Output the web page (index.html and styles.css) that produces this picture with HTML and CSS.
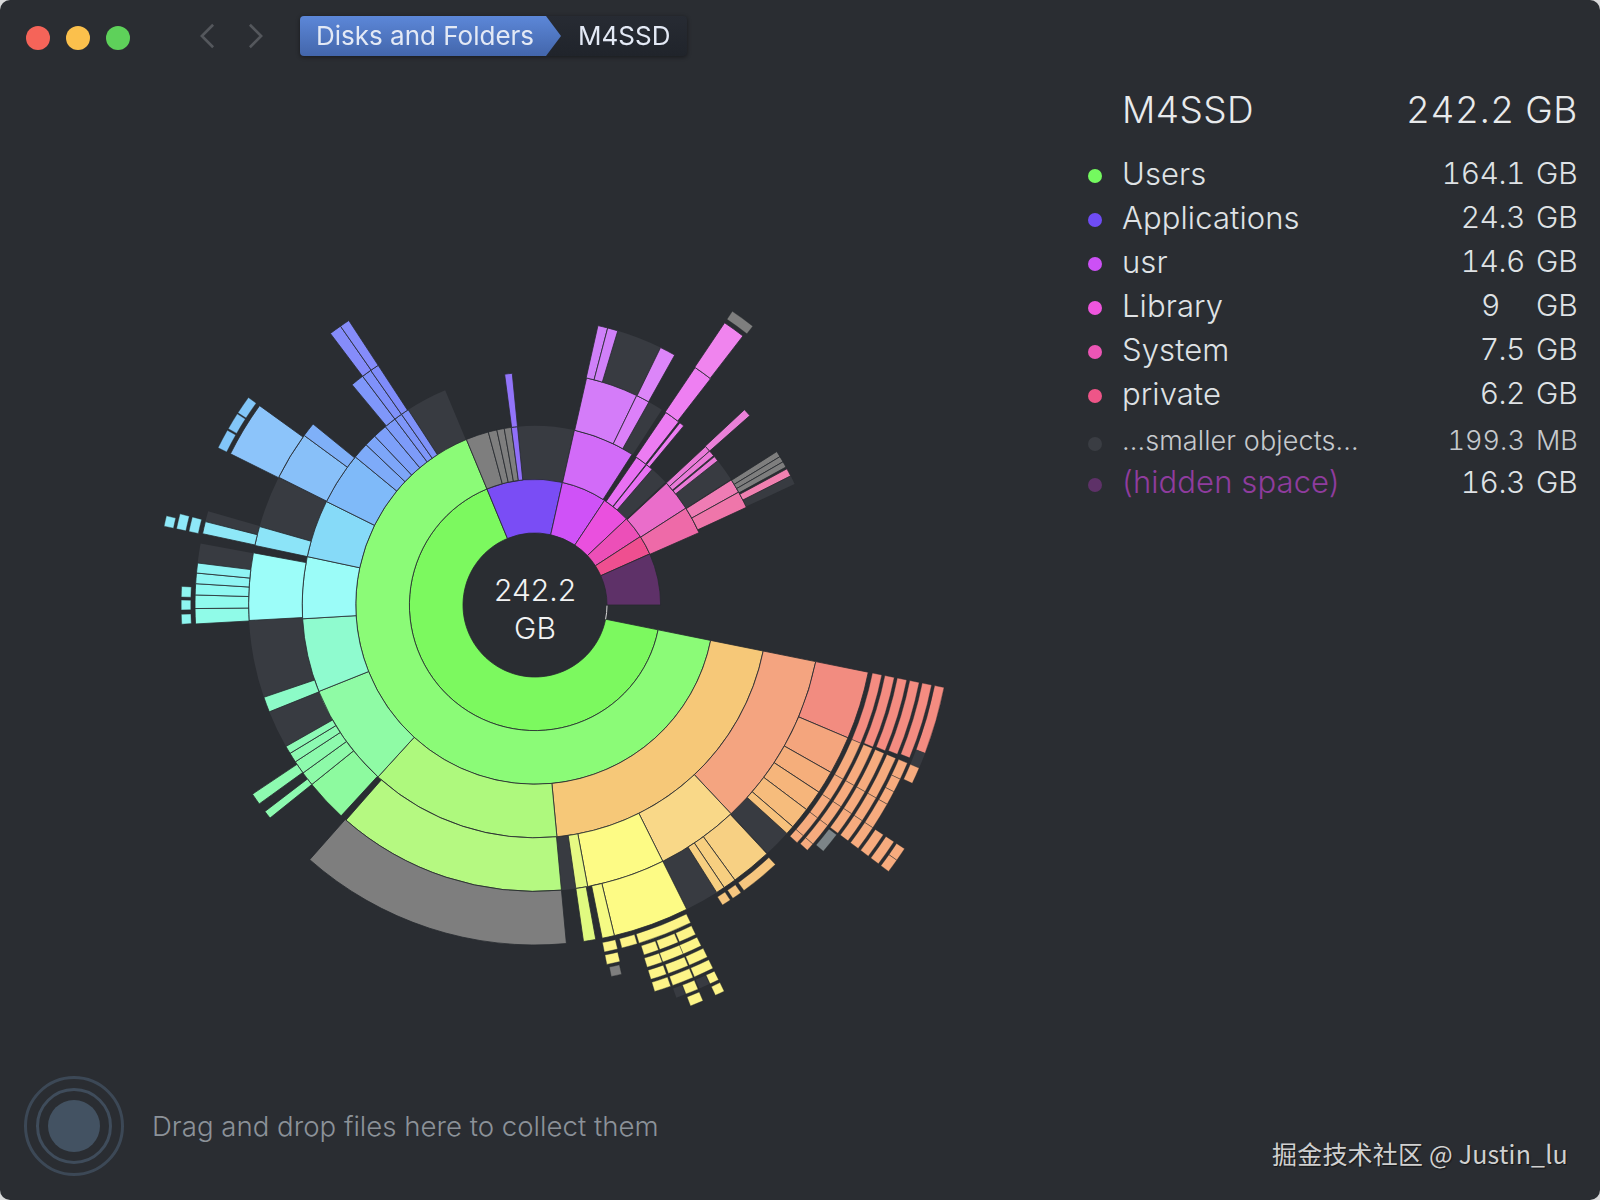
FILE: index.html
```html
<!DOCTYPE html>
<html lang="en">
<head>
<meta charset="utf-8">
<title>DaisyDisk</title>
<link rel="stylesheet" href="styles.css">
</head>
<body>
<div class="window">
  <header class="toolbar">
    <div class="lights">
      <span class="light red"></span>
      <span class="light yellow"></span>
      <span class="light green"></span>
    </div>
    <nav class="history">
      <svg class="chev" viewBox="0 0 16 26"><polyline points="14,1 2,13 14,25"/></svg>
      <svg class="chev" viewBox="0 0 16 26"><polyline points="2,1 14,13 2,25"/></svg>
    </nav>
    <div class="crumbs">
      <span class="crumb root">Disks and Folders</span>
      <span class="crumb leaf">M4SSD</span>
    </div>
  </header>

  <main class="content">
    <div class="chart-wrap">
      <svg id="sunburst" class="chart" viewBox="0 75 1088 1000">
        <g id="sectors"></g>
        <text class="center-num" x="535" y="601">242.2</text>
        <text class="center-num" x="535" y="639">GB</text>
      </svg>
    </div>
    <aside class="legend">
      <div class="legend-head"><span class="disk">M4SSD</span><span class="total">242.2 GB</span></div>
      <ul class="rows">
        <li class="row"><i class="dot c-users"></i><span class="name">Users</span><span class="num">164.1</span><span class="unit">GB</span></li>
        <li class="row"><i class="dot c-apps"></i><span class="name">Applications</span><span class="num">24.3</span><span class="unit">GB</span></li>
        <li class="row"><i class="dot c-usr"></i><span class="name">usr</span><span class="num">14.6</span><span class="unit">GB</span></li>
        <li class="row"><i class="dot c-lib"></i><span class="name">Library</span><span class="num whole">9</span><span class="unit">GB</span></li>
        <li class="row"><i class="dot c-sys"></i><span class="name">System</span><span class="num">7.5</span><span class="unit">GB</span></li>
        <li class="row"><i class="dot c-priv"></i><span class="name">private</span><span class="num">6.2</span><span class="unit">GB</span></li>
        <li class="row small"><i class="dot c-small"></i><span class="name">...smaller objects...</span><span class="num">199.3</span><span class="unit">MB</span></li>
        <li class="row hidden-space"><i class="dot c-hidden"></i><span class="name">(hidden space)</span><span class="num">16.3</span><span class="unit">GB</span></li>
      </ul>
    </aside>
  </main>

  <footer class="collector">
    <div class="target"><div class="target-mid"><div class="target-core"></div></div></div>
    <p class="hint">Drag and drop files here to collect them</p>
  </footer>

  <div class="watermark">掘金技术社区 @ Justin_lu</div>
</div>
<script src="chart.js"></script>
</body>
</html>
```
FILE: styles.css
```css
* { box-sizing: border-box; }
html, body { margin: 0; padding: 0; }
body {
  background: #d9dadb;
  font-family: "Inter", "Noto Sans", sans-serif;
  font-weight: 300;
  color: #e4e6e9;
}
.window {
  position: relative;
  width: 1600px;
  height: 1200px;
  background: #2a2d32;
  border-radius: 10px;
  overflow: hidden;
  display: flex;
  flex-direction: column;
}

/* toolbar */
.toolbar {
  height: 75px;
  flex: none;
  display: flex;
  align-items: center;
  padding-left: 26px;
}
.lights { display: flex; gap: 16px; }
.light { width: 24px; height: 24px; border-radius: 50%; }
.red { background: #f56459; }
.yellow { background: #fbc04c; }
.green { background: #5ed15a; }
.history {
  display: flex;
  gap: 33px;
  margin-left: 70px;
  margin-top: -3px;
}
.chev { width: 15px; height: 26px; }
.chev polyline { fill: none; stroke: #54575c; stroke-width: 2.8; }
.crumbs {
  display: flex;
  margin-left: 37px;
  height: 40px;
  margin-top: -3px;
  filter: drop-shadow(0 1px 2px rgba(0, 0, 0, .45));
}
.crumb {
  display: flex;
  align-items: center;
  padding-bottom: 2px;
  font-size: 26px;
  font-weight: 400;
  color: #e3e9f5;
}
.root {
  position: relative;
  z-index: 1;
  width: 261px;
  padding-left: 16px;
  border-radius: 4px 0 0 4px;
  background: linear-gradient(#5c87d8, #4366ab);
  clip-path: polygon(0 0, calc(100% - 15px) 0, 100% 50%, calc(100% - 15px) 100%, 0 100%);
}
.leaf {
  width: 141px;
  margin-left: -15px;
  padding-left: 32px;
  border-radius: 0 4px 4px 0;
  background: linear-gradient(#272b33, #20242b);
}

/* main */
.content {
  flex: 1;
  display: flex;
  min-height: 0;
}
.chart-wrap { width: 1088px; flex: none; }
.chart { display: block; width: 1088px; height: 1000px; overflow: visible; }
.center-num {
  font-family: "Inter", sans-serif;
  font-weight: 300;
  font-size: 30px;
  fill: #f2f3f4;
  text-anchor: middle;
}

/* legend */
.legend { flex: 1; padding: 12px 22px 0 0; }
.legend-head {
  display: flex;
  justify-content: space-between;
  padding-left: 34px;
  font-size: 37px;
  line-height: 46px;
  color: #e8eaec;
}
.disk { letter-spacing: .4px; }
.total { letter-spacing: .6px; font-variant-numeric: tabular-nums; }
.rows { list-style: none; margin: 18px 0 0; padding: 0; }
.row {
  display: grid;
  grid-template-columns: 34px 1fr auto 53px;
  align-items: center;
  height: 44px;
  font-size: 31px;
  letter-spacing: .1px;
  color: #dfe2e5;
}
.dot { width: 14px; height: 14px; border-radius: 50%; margin-top: 6px; margin-left: 0; }
.num {
  text-align: right;
  font-size: 30px;
  letter-spacing: -.5px;
  font-variant-numeric: tabular-nums;
}
.whole { padding-right: 25px; }
.unit { padding-left: 11px; font-size: 30px; letter-spacing: 0; }
.small { height: 45px; font-size: 27px; color: #c6c9cd; margin-top: 3px; }
.small .num { font-size: 27px; letter-spacing: .1px; }
.small .unit { font-size: 27px; padding-left: 11px; }
.hidden-space { height: 36px; }
.hidden-space .name { color: #8f3c9e; }
.c-users { background: #74f95f; }
.c-apps { background: #6f4cf5; }
.c-usr { background: #cc50f5; }
.c-lib { background: #ee55dd; }
.c-sys { background: #ec55b5; }
.c-priv { background: #ee5588; }
.c-small { background: #3a3d43; }
.c-hidden { background: #5e3168; }

/* footer */
.collector {
  flex: none;
  height: 125px;
  display: flex;
  align-items: flex-start;
  padding-left: 24px;
}
.target {
  width: 100px;
  height: 100px;
  margin-top: 1px;
  border: 3px solid #3c4856;
  border-radius: 50%;
  display: flex;
  align-items: center;
  justify-content: center;
}
.target-mid {
  width: 76px;
  height: 76px;
  border: 3px solid #3f4c5b;
  border-radius: 50%;
  display: flex;
  align-items: center;
  justify-content: center;
}
.target-core {
  width: 52px;
  height: 52px;
  border-radius: 50%;
  background: #435262;
}
.hint {
  margin: 33px 0 0 28px;
  font-size: 27.6px;
  line-height: 36px;
  color: #8c9299;
}
.watermark {
  position: absolute;
  left: 1272px;
  top: 1135px;
  font-family: "Noto Sans CJK SC", "Noto Sans", sans-serif;
  font-size: 25px;
  font-weight: 400;
  line-height: 36px;
  letter-spacing: .2px;
  color: #d0d0d0;
  text-shadow: 1px 1px 1px rgba(0, 0, 0, .5);
  white-space: nowrap;
}
```
FILE: chart.js
```js
(function () {
  var CX = 535, CY = 605;
  var RINGS = [72, 125.6, 179.2, 232.8, 286.4, 340];
  var DARK = '#383b41', GRAY = '#7e7e7e';

  function bandR(k) { return [344.2 + 12.7 * k, 353.8 + 12.7 * k]; }

  /* [ring, startDeg, endDeg, colour] – degrees clockwise from north */
  var segs = [
    /* ring 0 */
    [0, 101.4, 337.5, '#7cf95f'], [0, 337.5, 372.6, '#7a4df5'], [0, 12.6, 33.6, '#cf52f7'],
    [0, 33.6, 46.7, '#ea50de'], [0, 46.7, 57, '#ec4fb8'], [0, 57, 66, '#ef4f90'], [0, 66, 90, '#5e3168'],
    /* ring 1 */
    [1, 101.4, 337.5, '#8bfb77'],
    [1, 354.3, 372.6, DARK],
    [1, 337.5, 344.9, GRAY], [1, 344.9, 347.7, GRAY], [1, 347.7, 350.1, GRAY], [1, 350.1, 352.4, GRAY],
    [1, 352.4, 354.4, '#906ff9'],
    [1, 12.7, 32.8, '#d26bf8'],
    [1, 34.5, 38.3, '#e870f3'], [1, 38.5, 40.8, '#e870f3'], [1, 40.8, 46.7, DARK],
    [1, 47.2, 57.3, '#ea6dca'], [1, 57.3, 66.2, '#ee6aa8'],
    /* ring 2 */
    [2, 101.4, 174.6, '#f6c878'], [2, 174.6, 222.4, '#aef97d'], [2, 222.4, 248.2, '#8ffba5'],
    [2, 248.2, 266.6, '#8ffbcf'], [2, 266.6, 282, '#9bfcf8'], [2, 282, 296.4, '#86daf8'],
    [2, 296.4, 309.5, '#7fbaf9'],
    [2, 309.5, 313.5, '#7eabf9'], [2, 313.5, 316.5, '#7da6f9'], [2, 316.5, 320, '#7da0f9'],
    [2, 320, 323, '#7d9bf9'], [2, 323, 325, '#7e96f9'], [2, 325, 327, '#7e91f9'],
    [2, 327, 337.3, DARK],
    [2, 352.5, 354.4, '#9274fa'],
    [2, 12.8, 25.9, '#d47cf9'], [2, 25.9, 29.3, '#dc80f9'], [2, 29.3, 33, DARK],
    [2, 34.2, 38.1, '#ec7cf2'], [2, 38.5, 39.7, '#ec7cf2'],
    [2, 47.1, 48.6, '#e97ad8'], [2, 48.6, 50.1, '#e97ad8'], [2, 50.4, 51.7, '#e97ad8'], [2, 51.7, 57.3, DARK],
    [2, 57.5, 61, '#ef7cb4'], [2, 61, 65.2, '#ef76aa'],
    /* ring 3 */
    [3, 101.4, 136.8, '#f4a480'], [3, 136.8, 153.5, '#f9d888'], [3, 153.5, 169.4, '#fdfb85'],
    [3, 169.4, 171.8, '#e6f983'], [3, 171.8, 174.7, DARK], [3, 174.7, 221.3, '#b5f981'],
    [3, 222.6, 231.2, '#8dfa9f'], [3, 231.2, 234.1, '#8dfaa8'], [3, 234.1, 236.8, '#8dfaad'],
    [3, 236.8, 238.8, '#8dfab2'], [3, 238.8, 240.4, '#8dfab6'], [3, 240.4, 248.1, DARK],
    [3, 248.1, 251.2, '#8cfbc7'], [3, 251.2, 266.9, DARK],
    [3, 266.9, 280.5, '#9cfdf9'], [3, 282, 285.9, '#8ce4f8'], [3, 285.9, 296.4, DARK],
    [3, 296.5, 306.3, '#88c0f9'], [3, 306.3, 309.2, '#7fb0f8'],
    [3, 320.3, 323, '#7f97fa'], [3, 323, 325, '#7f91fa'], [3, 325, 326.8, '#7f8cfa'],
    [3, 12.7, 14.7, '#cf80f9'], [3, 14.7, 16.8, '#d180f9'], [3, 16.8, 26, DARK], [3, 26, 29.2, '#dc85f9'],
    [3, 34, 37.8, '#ee7ff2'], [3, 47, 48.6, '#ea80d8'],
    [3, 57.6, 58.8, GRAY], [3, 58.8, 60, GRAY], [3, 60, 61.2, GRAY], [3, 61.6, 63.2, '#f080b0'], [3, 63.2, 65, DARK],
    /* ring 4 */
    [4, 101.4, 113, '#f28c80'], [4, 113, 119.5, '#f4a57d'], [4, 119.5, 123.4, '#f5ae7b'],
    [4, 123.4, 127, '#f6b57b'], [4, 127, 130.7, '#f6bc7c'], [4, 130.7, 132.2, '#f7c27c'], [4, 132.2, 136.9, DARK],
    [4, 137, 144, '#f7d083'], [4, 144, 146.2, '#f7cf80'], [4, 146.2, 147.7, '#f7cf80'], [4, 147.7, 153.5, DARK],
    [4, 153.5, 166.5, '#fdfb85'], [4, 166.5, 168.6, '#f5fa84'], [4, 169.7, 171.8, '#e0fa80'],
    [4, 174.7, 221.5, GRAY],
    [4, 231.2, 232.6, '#8dfab0'], [4, 234.2, 236.2, '#8dfab0'],
    [4, 266.8, 269.4, '#90fbe8'], [4, 269.4, 271.7, '#90fbee'], [4, 271.7, 273.6, '#90f9f2'],
    [4, 273.6, 275.4, '#90f6f4'], [4, 275.4, 277.1, '#8ff4f4'], [4, 277.1, 280.4, DARK],
    [4, 282.1, 284.2, '#8ee8f8'], [4, 284.2, 286, DARK],
    [4, 296.4, 305.9, '#8cc4fa'],
    [4, 323, 325.1, '#858cfa'], [4, 325.1, 326.8, '#858cfa'],
    [4, 33.9, 37.7, '#f084ee']
  ];

  /* [band, startDeg, endDeg, colour] – thin outer tiers */
  var SAL = '#f48c81', ORA = '#f6ab7e', YEL = '#fdf488', AQU = '#8ef5f0';
  var bands = [
    [0, 101.4, 113, SAL], [1, 101.4, 112.8, SAL], [2, 101.4, 112.6, SAL],
    [3, 101.4, 112.4, SAL], [4, 101.4, 112.2, SAL], [5, 101.4, 110.8, SAL], [5, 110.8, 113, DARK],
    [0, 113, 119.5, ORA], [0, 119.5, 123.4, ORA], [0, 123.4, 127, ORA], [0, 127, 130.7, ORA], [0, 130.7, 132.2, ORA],
    [1, 113, 119.5, ORA], [1, 119.5, 123.4, ORA], [1, 123.4, 127, ORA], [1, 127, 130.7, ORA], [1, 130.7, 132, ORA],
    [2, 113, 119.5, ORA], [2, 119.5, 123.4, ORA], [2, 123.4, 127, ORA], [2, 127.3, 130.5, '#7c8488'],
    [3, 113, 119.5, ORA], [3, 119.5, 123.4, ORA], [3, 123.4, 127, ORA],
    [4, 113, 115.5, ORA], [4, 115.5, 117.5, ORA], [4, 117.5, 119.5, ORA], [4, 119.5, 123.4, ORA], [4, 123.4, 127, ORA],
    [5, 113, 115.3, ORA], [5, 123.4, 127, ORA], [6, 123.4, 127, ORA],
    [7, 123.4, 125.2, ORA], [7, 125.2, 127, ORA],
    [0, 137.2, 143.8, '#f6c67f'], [0, 144.4, 146, '#f6c67f'], [0, 146.5, 148, '#f6c67f'],
    [0, 153.9, 162.9, YEL], [0, 163.2, 165.8, YEL], [0, 166.5, 168.7, YEL],
    [1, 154, 156.8, YEL], [1, 157, 160.1, YEL], [1, 160.3, 162.7, YEL], [1, 166.6, 168.7, YEL],
    [2, 154, 157, YEL], [2, 157, 160.3, YEL], [2, 160.4, 162.8, YEL], [2, 166.8, 168.4, GRAY],
    [3, 153.9, 156.8, YEL], [3, 157, 160.1, YEL], [3, 160.4, 162.8, YEL],
    [4, 153.9, 156.8, YEL], [4, 157, 160.1, YEL], [4, 160.4, 162.8, YEL],
    [5, 153.9, 155.2, YEL], [5, 155.3, 156.8, DARK], [5, 157, 158.8, YEL], [5, 158.9, 160.2, DARK],
    [6, 153.9, 155.2, YEL], [6, 157, 158.8, YEL],
    [0, 266.9, 268.5, AQU], [0, 269.2, 270.8, AQU], [0, 271.3, 273, AQU],
    [0, 296.4, 299.6, '#82c6f8'], [0, 299.9, 302.7, '#82c6f8'], [0, 302.9, 305.9, '#82c6f8'],
    [0, 282, 284.4, '#8ee8f8'], [1, 282, 284.4, '#8ee8f8'], [2, 282, 283.6, '#8ee8f8'],
    [0, 33.9, 38, GRAY]
  ];

  function pt(r, deg) {
    var a = deg * Math.PI / 180;
    return (CX + r * Math.sin(a)).toFixed(2) + ' ' + (CY - r * Math.cos(a)).toFixed(2);
  }
  function sector(r0, r1, a0, a1) {
    var large = a1 - a0 > 180 ? 1 : 0;
    return 'M' + pt(r0, a0) + 'L' + pt(r1, a0) +
      'A' + r1 + ' ' + r1 + ' 0 ' + large + ' 1 ' + pt(r1, a1) +
      'L' + pt(r0, a1) +
      'A' + r0 + ' ' + r0 + ' 0 ' + large + ' 0 ' + pt(r0, a0) + 'Z';
  }

  var NS = 'http://www.w3.org/2000/svg';
  var host = document.getElementById('sectors');
  function add(d, colour, hair) {
    var p = document.createElementNS(NS, 'path');
    p.setAttribute('d', d);
    p.setAttribute('fill', colour);
    if (colour === DARK) {
      p.setAttribute('stroke', 'none');
    } else {
      p.setAttribute('stroke', '#262a2e');
      p.setAttribute('stroke-width', hair ? '0.4' : '0.8');
    }
    host.appendChild(p);
  }
  function byDarkFirst(a, b) { return (b[3] === DARK) - (a[3] === DARK); }
  segs.slice().sort(byDarkFirst).forEach(function (s) {
    add(sector(RINGS[s[0]], RINGS[s[0] + 1], s[1], s[2]), s[3]);
  });
  bands.forEach(function (b) {
    var r = bandR(b[0]);
    add(sector(r[0], r[1], b[1], b[2]), b[3], true);
  });

  /* hairline on the free-space gap of the hole */
  var tick = document.createElementNS(NS, 'path');
  tick.setAttribute('d', 'M' + pt(72, 90.5) + 'A72 72 0 0 1 ' + pt(72, 101.4));
  tick.setAttribute('fill', 'none');
  tick.setAttribute('stroke', '#d8d8d8');
  tick.setAttribute('stroke-width', '1');
  host.appendChild(tick);
})();
```
